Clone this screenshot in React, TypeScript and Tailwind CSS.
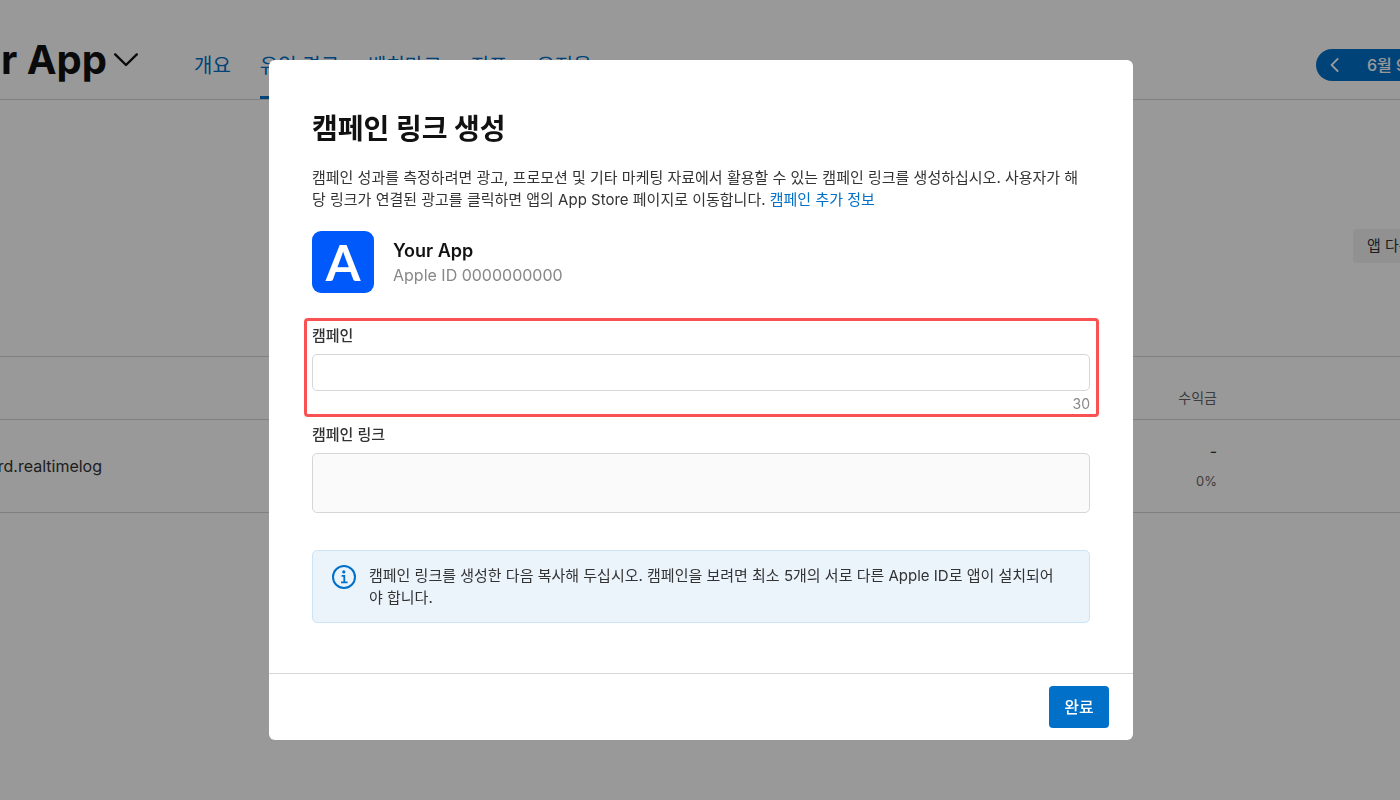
import { useState, type FormEvent } from "react";

const tabs = [
  { label: "개요", href: "#overview" },
  { label: "유입 경로", href: "#acquisition", active: true },
  { label: "벤치마크", href: "#benchmarks" },
  { label: "지표", href: "#metrics" },
  { label: "유지율", href: "#retention" },
];

const MAX_LENGTH = 30;

function InfoIcon() {
  return (
    <svg
      width="24"
      height="24"
      viewBox="0 0 24 24"
      fill="none"
      stroke="#0070c9"
      className="shrink-0"
      aria-hidden
    >
      <circle cx="12" cy="12" r="11" strokeWidth="2" />
      <circle cx="11.8" cy="6.9" r="1.6" fill="#0070c9" stroke="none" />
      <path d="M9.6 10.9h2.7v6.2M9 17.3h6.6" strokeWidth="1.8" />
    </svg>
  );
}

function Header() {
  return (
    <header className="flex h-25 items-center overflow-hidden border-b border-[#d6d6d6]">
      {/* the title is scrolled partly off the left edge */}
      <div className="flex w-[107px] shrink-0 justify-end">
        <h1 className="mt-5 text-[40px] leading-12 font-bold whitespace-nowrap text-[#111]">
          Your App
        </h1>
      </div>
      <button type="button" aria-label="앱 선택" className="mt-5 ml-[7px] shrink-0">
        <svg
          width="24"
          height="14"
          viewBox="0 0 24 14"
          fill="none"
          stroke="#111"
          strokeWidth="2.4"
          strokeLinecap="round"
          strokeLinejoin="round"
        >
          <path d="M1.2 1.4 12 12 22.8 1.4" />
        </svg>
      </button>

      <nav className="ml-14 flex gap-[29px] self-stretch">
        {tabs.map((tab) => (
          <a
            key={tab.label}
            href={tab.href}
            className={
              tab.active
                ? "border-b-3 border-[#0070c9] pt-[50px] text-xl leading-8 whitespace-nowrap text-[#0070c9]"
                : "pt-[50px] text-xl leading-8 whitespace-nowrap text-[#0070c9]"
            }
          >
            {tab.label}
          </a>
        ))}
      </nav>

      <button
        type="button"
        className="mt-[30px] ml-auto flex h-8 w-[84px] shrink-0 items-center gap-7 overflow-hidden rounded-l-full bg-[#0070c9] pl-3.5 text-base font-medium whitespace-nowrap text-white"
      >
        <svg
          width="9"
          height="14"
          viewBox="0 0 9 14"
          fill="none"
          stroke="currentColor"
          strokeWidth="1.8"
          strokeLinecap="round"
          strokeLinejoin="round"
          className="shrink-0"
          aria-hidden
        >
          <path d="M7.6 1 1.6 7l6 6" />
        </svg>
        6월 9일
      </button>
    </header>
  );
}

function Sources() {
  return (
    <main className="overflow-hidden">
      <div className="flex h-64 items-center justify-end pt-9">
        <button
          type="button"
          className="h-[34px] w-[47px] overflow-hidden rounded-l bg-[#f2f2f2] pl-3.5 text-left text-[15px] whitespace-nowrap text-[#333]"
        >
          앱 다운로드
        </button>
      </div>

      <table className="w-full border-b border-[#d6d6d6] text-[#333]">
        <thead>
          <tr className="h-[63px] border-y border-[#d6d6d6]">
            <th aria-label="캠페인" />
            <th className="pr-[183px] pb-[11px] text-right align-bottom text-sm font-normal text-[#666]">
              수익금
            </th>
          </tr>
        </thead>
        <tbody>
          <tr className="h-[93px]">
            <td>
              <div className="flex w-[102px] justify-end text-base">
                rd.realtimelog
              </div>
            </td>
            <td className="pr-[183px] text-right">
              <p className="text-base leading-[30px]">-</p>
              <p className="text-[13px] leading-[30px] text-[#666]">0%</p>
            </td>
          </tr>
        </tbody>
      </table>
    </main>
  );
}

function CampaignDialog() {
  const [name, setName] = useState("");

  const onSubmit = (e: FormEvent) => e.preventDefault();

  return (
    <form
      role="dialog"
      aria-labelledby="dialog-title"
      onSubmit={onSubmit}
      className="w-full max-w-[864px] rounded-md bg-white text-[15px] leading-[22px] text-[#333]"
    >
      <div className="px-[43px] pt-[51px] pb-[50px]">
        <h2
          id="dialog-title"
          className="text-[28px] leading-9 font-bold text-[#111]"
        >
          캠페인 링크 생성
        </h2>
        <p className="mt-5 break-all">
          캠페인 성과를 측정하려면 광고, 프로모션 및 기타 마케팅 자료에서 활용할
          수 있는 캠페인 링크를 생성하십시오. 사용자가 해당 링크가 연결된 광고를
          클릭하면 앱의 App Store 페이지로 이동합니다.{" "}
          <a href="#campaign-info" className="text-[#0070c9]">
            캠페인 추가 정보
          </a>
        </p>

        {/* app */}
        <div className="mt-5 flex items-center gap-[19px]">
          <div
            className="grid h-[62px] w-[62px] place-items-center rounded-[9px] bg-[#0059fa] font-['Lato',sans-serif] text-[50px] leading-12 font-bold text-white"
            aria-hidden
          >
            A
          </div>
          <div className="pt-0.5">
            <p className="text-lg leading-6 font-semibold text-[#111]">
              Your App
            </p>
            <p className="text-base leading-6 text-[#888]">
              Apple ID 0000000000
            </p>
          </div>
        </div>

        {/* highlighted campaign name field */}
        <div className="-mr-[9px] -ml-2 mt-[25px] rounded border-3 border-[#fa5252] pt-1 pr-1.5 pl-[5px]">
          <label htmlFor="campaign" className="block font-medium">
            캠페인
          </label>
          <input
            id="campaign"
            type="text"
            maxLength={MAX_LENGTH}
            value={name}
            onChange={(e) => setName(e.target.value)}
            className="mt-[7px] block h-[37px] w-full rounded-[5px] border border-[#d6d6d6] bg-white px-3 outline-none"
          />
          <p className="mt-[3px] text-right text-sm leading-5 text-[#888]">
            {MAX_LENGTH - name.length}
          </p>
        </div>

        <label htmlFor="campaign-link" className="mt-[7px] block font-medium">
          캠페인 링크
        </label>
        <textarea
          id="campaign-link"
          readOnly
          className="mt-[7px] block h-15 w-full resize-none rounded-[5px] border border-[#d6d6d6] bg-[#fafafa] px-3 py-2 outline-none"
        />

        <div className="mt-[37px] flex gap-[13px] rounded-[5px] border border-[#cce4f7] bg-[#ebf3fb] pt-3.5 pr-7 pb-[13px] pl-[19px]">
          <InfoIcon />
          <p className="break-all">
            캠페인 링크를 생성한 다음 복사해 두십시오. 캠페인을 보려면 최소 5개의
            서로 다른 Apple ID로 앱이 설치되어야 합니다.
          </p>
        </div>
      </div>

      <div className="flex justify-end border-t border-[#d6d6d6] px-6 py-3">
        <button
          type="submit"
          className="h-[42px] w-15 rounded bg-[#0070c9] text-base font-medium text-white"
        >
          완료
        </button>
      </div>
    </form>
  );
}

export default function App() {
  return (
    <div className="min-h-screen overflow-hidden bg-white font-['Inter','Noto_Sans_CJK_KR',sans-serif]">
      <Header />
      <Sources />

      {/* backdrop */}
      <div className="fixed inset-0 flex items-center justify-center bg-black/40 pl-0.5">
        <CampaignDialog />
      </div>
    </div>
  );
}
